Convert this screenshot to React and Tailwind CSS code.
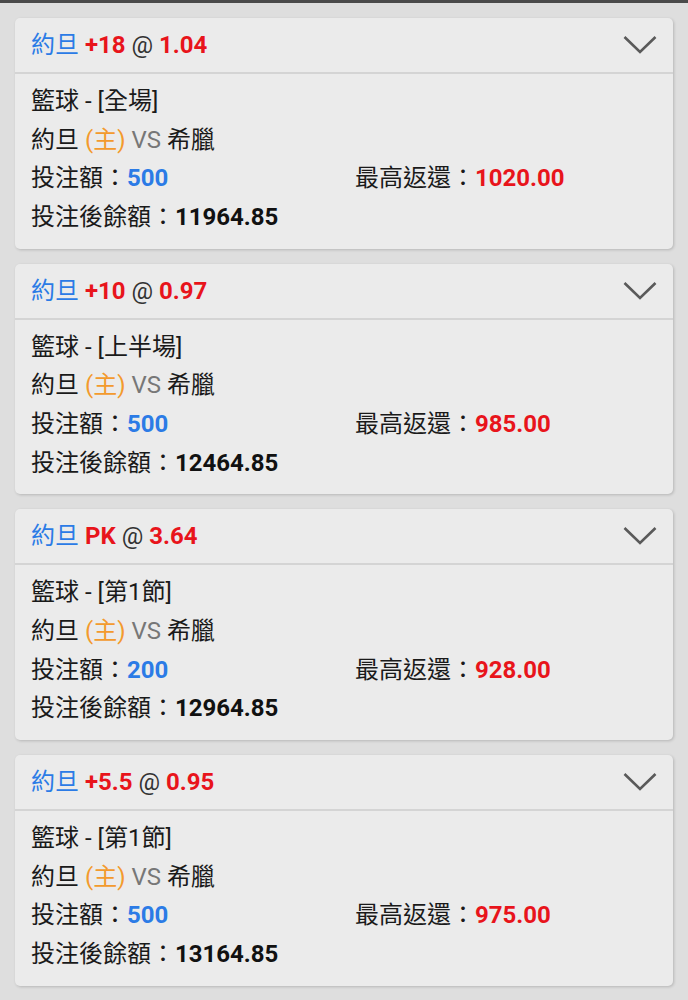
import React from "react";

const bets = [
  { hcp: "+18", odds: "1.04", type: "全場", amt: "500", ret: "1020.00", bal: "11964.85" },
  { hcp: "+10", odds: "0.97", type: "上半場", amt: "500", ret: "985.00", bal: "12464.85" },
  { hcp: "PK", odds: "3.64", type: "第1節", amt: "200", ret: "928.00", bal: "12964.85" },
  { hcp: "+5.5", odds: "0.95", type: "第1節", amt: "500", ret: "975.00", bal: "13164.85" },
];

const font = { fontFamily: "Roboto, 'Noto Sans CJK TC', sans-serif" };

function Card({ b }) {
  return (
    <div className="bg-[#ebebeb] rounded-[5px] shadow-[1px_1px_3px_rgba(0,0,0,0.18)]">
      <div className="h-[56px] flex items-center justify-between pl-[16px] pr-[16px] border-b-2 border-[#d4d4d4]">
        <div className="text-[24px] leading-none whitespace-pre">
          <span className="text-[#2b7be6]">約旦</span>{" "}
          <span className="text-[#e8141b] font-bold">{b.hcp}</span>{" "}
          <span className="text-[#333]">@</span>{" "}
          <span className="text-[#e8141b] font-bold">{b.odds}</span>
        </div>
        <svg width="34" height="20" viewBox="0 0 34 20">
          <polyline points="1.5,2 17,17 32.5,2" fill="none" stroke="#5a5a5a" strokeWidth="2.6" />
        </svg>
      </div>
      <div className="pl-[16px] pt-[8px] pb-[12px] text-[24px] leading-[38.67px] text-[#1a1a1a]">
        <div>籃球 - [{b.type}]</div>
        <div>
          約旦 <span className="text-[#f39a2d]">(主)</span> <span className="text-[#777]">VS</span> 希臘
        </div>
        <div className="flex">
          <div className="w-[324px]">
            投注額：<span className="text-[#2b7be6] font-bold">{b.amt}</span>
          </div>
          <div>
            最高返還：<span className="text-[#e8141b] font-bold">{b.ret}</span>
          </div>
        </div>
        <div>
          投注後餘額：<span className="font-bold text-[#111]">{b.bal}</span>
        </div>
      </div>
    </div>
  );
}

export default function App() {
  return (
    <div className="w-[688px] h-[1000px] overflow-hidden bg-[#dedede]" style={font}>
      <div className="h-[3px] bg-[#4a4a4a]" />
      <div className="pl-[15px] pr-[15px] pt-[15px] flex flex-col gap-[15px]">
        {bets.map((b, i) => (
          <Card key={i} b={b} />
        ))}
        <div className="bg-[#ebebeb] rounded-[5px] h-[60px]" />
      </div>
    </div>
  );
}
